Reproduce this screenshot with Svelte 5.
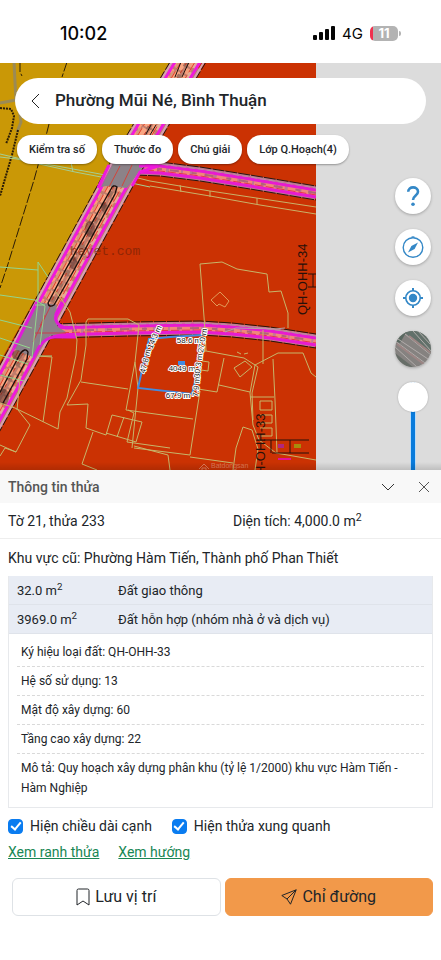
<script>
  let edgeLengths = $state(true);
  let neighbours = $state(true);
  let opacity = $state(100);

  const layers = ['Kiểm tra số', 'Thước đo', 'Chú giải', 'Lớp Q.Hoạch(4)'];
  const areas = [
    { size: '32.0 m', use: 'Đất giao thông' },
    { size: '3969.0 m', use: 'Đất hỗn hợp (nhóm nhà ở và dịch vụ)' }
  ];
  const details = [
    'Ký hiệu loại đất: QH-OHH-33',
    'Hệ số sử dụng: 13',
    'Mật độ xây dựng: 60',
    'Tầng cao xây dựng: 22',
    'Mô tả: Quy hoạch xây dựng phân khu (tỷ lệ 1/2000) khu vực Hàm Tiến - Hàm Nghiệp'
  ];

  const mainRoad = [[188, 62], [179, 77], [148, 130], [125, 168], [71, 267], [38, 328], [0, 398], [-22, 438]];
  const crossRoad = [[50, 332], [130, 330], [200, 329], [232, 331], [270, 335], [316, 342]];
  const northRoad = [[135, 169], [160, 170], [200, 175], [250, 183], [316, 194]];

  const line = (pts, dx, dy) => 'M' + pts.map(([x, y]) => `${x + dx},${y + dy}`).join('L');

  // Parallel lane strokes: [offset, colour, width, dash]
  const mainLanes = [
    [-11, '#ff9c78', 4, '5 3'],
    [-8, '#d8957b', 4, '7 4'],
    [-4, '#f9a582', 5, '9 2'],
    [0, '#a1705f', 5, '6 9 4 11'],
    [5, '#f39f7c', 5, '6 2'],
    [9, '#e2ad98', 4, '7 5'],
    [-7, '#e8402a', 1, '8 3'],
    [7, '#e8402a', 1, '12 3'],
    [-1, '#cf3a25', 1, '4 5'],
    [-13, '#ef1adb', 3, ''],
    [12, '#ef1adb', 3, ''],
    [-16, '#d6a2b4', 2, ''],
    [16, '#d6a2b4', 2, ''],
    [-18, '#26140c', 1, '9 2'],
    [18, '#26140c', 1, '9 2']
  ];
  const sideLanes = [
    [0, '#f0887a', 8, '7 3 12 2'],
    [-1, '#b06478', 2, '9 13 5 8'],
    [1, '#e83548', 1, '8 3'],
    [-4, '#e71bd0', 3, ''],
    [3, '#e71bd0', 3, ''],
    [-6, '#b98ea4', 1, '6 3'],
    [-8, '#26140c', 1, '12 1'],
    [6, '#26140c', 1, '12 1']
  ];
</script>

<div class="app">
  <header class="status">
    <time>10:02</time>
    <div class="signals">
      <svg width="22" height="14" viewBox="0 0 22 14" aria-hidden="true">
        <rect x="0" y="9" width="4" height="5" rx="1" /><rect x="6" y="6" width="4" height="8" rx="1" />
        <rect x="12" y="3" width="4" height="11" rx="1" /><rect x="18" y="0" width="4" height="14" rx="1" />
      </svg>
      <span class="net">4G</span>
      <span class="battery">11</span>
    </div>
  </header>

  <main class="map">
    <svg class="tiles" viewBox="0 63 316 407" preserveAspectRatio="xMinYMin slice" aria-hidden="true">
      <rect y="62" width="316" height="408" fill="#cb3203" />
      <path d="M0,62H170L128,135L107,168L53,267L0,362Z" fill="#ca9806" />

      <g fill="none" stroke="#9b8a55" stroke-width="3">
        <path d="M14,62L15,82L16,100L0,103M19,108L21,122L17,132" />
      </g>
      <g fill="none" stroke="#2b1c06">
        <path d="M20,62V72L22,76M67,62L62,77M49,124L45,140L34,180L8,264L0,288" stroke-dasharray="10 2" />
        <path d="M0,108L11,109L14,116L12,128L6,144M18,130L12,155L7,172L0,196" stroke-width="2" stroke-dasharray="2 1" />
      </g>

      <g fill="none" stroke="#a5cf93">
        <path d="M0,154L30,161L100,174L130,180M0,157L17,159L75,172L122,181L150,187M71,162L73,172M119,172L120,181" />
      </g>
      <g fill="none" stroke="#c9b269">
        <path d="M130,176L150,181L210,191L316,207M150,186L210,196L260,205L316,214M180,185L181,192M210,191V197M257,198V204" />
      </g>

      <path d={line(northRoad, 0, -1)} fill="none" stroke="#bd7790" stroke-width="14" />
      {#each sideLanes as [d, color, w, dash]}
        <path d={line(northRoad, 0, d)} fill="none" stroke={color} stroke-width={w} stroke-dasharray={dash} />
      {/each}
      <path d={line(crossRoad, 0, -1)} fill="none" stroke="#c37a91" stroke-width="13" />
      {#each sideLanes as [d, color, w, dash]}
        <path d={line(crossRoad, 0, d)} fill="none" stroke={color} stroke-width={w} stroke-dasharray={dash} />
      {/each}
      <path d={line(mainRoad, 0, 0)} fill="none" stroke="#c07d6c" stroke-width="31" />
      {#each mainLanes as [d, color, w, dash]}
        <path d={line(mainRoad, d, 0)} fill="none" stroke={color} stroke-width={w} stroke-dasharray={dash} />
      {/each}

      <path d="M113,163H146L139,172L127,188L106,186L101,187Z" fill="#8c8288" />
      <path d="M139,166H158L140,172L132,186M109,165L98,188" fill="none" stroke="#ef1adb" stroke-width="3" />
      <path d="M132,165L122,186M120,166L109,187" stroke="#d2453b" />
      <path d="M37,302L57,305L54,319L58,327L66,332L50,336L42,346L35,358L14,349Z" fill="#8c8088" />
      <path d="M62,302L56,314Q54,325 66,328H76M76,337H55Q46,337 39,347L33,359M37,302L14,348" fill="none" stroke="#e01bd8" stroke-width="3" />
      <path d="M35,333H66M51,305L33,342M45,315L40,326" stroke="#c94049" fill="none" />
      <g fill="#4e2b29" opacity=".5">
        <ellipse cx="90" cy="229" rx="5" ry="8" /><ellipse cx="104" cy="207" rx="3" ry="5" /><ellipse cx="73" cy="263" rx="4" ry="6" />
        <ellipse cx="17" cy="355" rx="5" ry="5" /><ellipse cx="4" cy="397" rx="5" ry="8" />
      </g>
      <g fill="none" stroke="#1d0e0b" stroke-width="1.4" stroke-linecap="round">
        <path d="M111,189Q113,184 117,187L115,194L74,270L54,305Q49,308 48,303L66,269Z" />
        <path d="M-2,396L20,354Q25,347 28,352L27,359L3,403" />
        <path d="M181,62L175,77M189,62L182,77M151,125L146,134M156,125L150,135" stroke-width="1" />
      </g>

      <g fill="none" stroke="#93d58e">
        <path d="M0,267L38,270M38,262V300L32,358M38,262L48,277M0,295L35,300L45,306M0,320L32,328M0,338L30,348M0,355L28,364M0,375L24,381M45,306L40,345M35,305H45M52,356L38,356" />
      </g>
      <g fill="none" stroke="#c7b66a">
        <path d="M38,356L52,357L43,422M0,403L15,408L58,429L60,412L67,398L76,355L77,340L70,312L62,300L55,291" />
        <path d="M18,410L30,425L16,452L0,445M0,456L5,448L16,452M20,378L17,410" />
        <path d="M86,322L88,319L128,319L139,325L135,362L126,410L170,416M86,322V345L81,380L67,405L88,404L86,428L106,435L112,415L142,422L136,442L106,433M124,417L117,437M81,382L128,389M135,362L138,388L132,448M93,432L82,464L97,470M128,410L134,413L127,442L170,448" />
        <path d="M170,416L193,419M134,446L168,455L170,470M134,448L190,455L200,391M190,457L233,463" />
        <path d="M200,264L222,262L237,269L267,274L269,292L281,291L288,313V328M200,264L205,330L206,351L244,358L255,365L278,353H303L311,373L316,377M206,351L198,352M198,389L217,392L224,358M219,385L250,392M202,361L209,362L208,371L201,370M263,330V364M255,365L250,393L253,425L259,440L276,453L316,460M255,365L258,367L252,393L253,420M273,359L275,400L277,453M250,397H274M260,401H272V410H260ZM260,415H272V423H260M260,428H272V436H260M233,470L236,448L243,427L252,430L258,449L255,470" />
        <path d="M211,300L220,292L229,301L225,307L219,304L217,306Z" stroke="#e09b58" />
        <path d="M234,368L245,361L252,367L240,377ZM237,352L241,354M244,354L248,353" />
        <path d="M225,332L236,328L275,329L285,328" stroke="#b6a3a5" />
      </g>

      <path d="M202,335L170,337L149,339L138,388L192,394L198,370" fill="none" stroke="#438be0" stroke-width="2" />
      <rect x="178" y="361" width="7" height="4" fill="#438be0" />
      <g class="measure" text-anchor="middle">
        <text x="189" y="343">58.6 m</text><text x="182" y="371">4049 m</text><text x="178" y="398">67.9 m</text>
        <text transform="translate(148 362) rotate(-76)">47.8 m</text>
        <text transform="translate(157 338) rotate(-66)">14.3 m</text>
        <text transform="translate(205 341) rotate(-80)">27.0 m</text>
        <text transform="translate(201 366) rotate(-83)">30.3 m</text>
        <text transform="translate(199 387) rotate(-84)">7.9 m</text>
      </g>

      <g class="zone">
        <text transform="translate(307 315) rotate(-90)">QH-OHH-34</text>
        <text transform="translate(265 485) rotate(-90)">QH-OHH-33</text>
      </g>
      <path d="M308,274H316M308,287H316M313,274V287M264,440H309M272,453H309M290,440V453M271,440V453" fill="none" stroke="#27100a" />
      <path d="M278,444h6v4h-6z" fill="#b1277d" /><path d="M294,444h7v4h-7z" fill="#a68c0d" /><path d="M278,458h13v2h-13z" fill="#e31297" />
      <text class="host" x="70" y="255">hayet.com</text>
      <path d="M199,469L204,464L209,469M202,470V468H206V470" fill="none" stroke="#df7a58" />
      <text class="credit" x="211" y="468">Batdongsan</text>
    </svg>

    <div class="search">
      <button class="back" aria-label="Quay lại">
        <svg width="10" height="16" viewBox="0 0 10 16"><path d="M8,1L1,8L8,15" /></svg>
      </button>
      <h1>Phường Mũi Né, Bình Thuận</h1>
    </div>
    <div class="chips">
      {#each layers as layer}<button>{layer}</button>{/each}
    </div>

    <div class="tools">
      <button aria-label="Trợ giúp">
        <svg width="24" height="24" viewBox="0 0 24 24"><path d="M7.2,7.8C7.2,1.8 17,2 17,7.7C17,11.4 12,11.5 12,16" stroke-width="2.6" /><circle cx="12" cy="20.2" r="1.8" class="solid" /></svg>
      </button>
      <button aria-label="La bàn">
        <svg width="24" height="24" viewBox="0 0 24 24"><circle cx="12" cy="12.5" r="9.8" stroke-width="1.4" /><path d="M9.5,2.4Q12,.2 14.5,2.4Z" class="solid" /><path d="M17,7.5L13.6,14L7,17.5L10.4,11Z" class="solid" /></svg>
      </button>
      <button aria-label="Vị trí của tôi">
        <svg width="24" height="24" viewBox="0 0 24 24"><circle cx="12" cy="12" r="7.2" stroke-width="1.6" /><circle cx="12" cy="12" r="4.2" class="solid" /><path d="M12,2V5M12,19V22M2,12H5M19,12H22" stroke-width="2" /></svg>
      </button>
      <button class="photo" aria-label="Ảnh vệ tinh">
        <svg width="36" height="36" viewBox="0 0 36 36">
          <rect width="36" height="36" fill="#858280" stroke="none" />
          <path d="M8,0L36,24V0Z" fill="#62706a" stroke="none" /><path d="M0,0H12L5,12L0,10Z" fill="#596860" stroke="none" />
          <g class="lanes"><path d="M0,10L30,32M3,8L36,30M10,3L36,24M18,0L36,20M0,16L22,36M23,0L36,14" /></g>
          <path d="M2,13L30,34M14,5L36,22" stroke="#9c8584" stroke-width="2" />
          <path d="M0,22L18,36H0Z" fill="#676e68" stroke="none" />
        </svg>
      </button>
      <input type="range" min="0" max="100" bind:value={opacity} aria-label="Độ mờ bản đồ" />
    </div>
  </main>

  <section class="panel">
    <div class="bar">
      <h2>Thông tin thửa</h2>
      <button aria-label="Thu gọn"><svg width="14" height="14" viewBox="0 0 14 14"><path d="M1,4L7,10L13,4" /></svg></button>
      <button class="close" aria-label="Đóng"><svg width="14" height="14" viewBox="0 0 14 14"><path d="M2,2L12,12M12,2L2,12" /></svg></button>
    </div>
    <div class="plot">
      <span>Tờ 21, thửa 233</span>
      <span>Diện tích: 4,000.0 m<sup>2</sup></span>
    </div>
    <p class="old">Khu vực cũ: Phường Hàm Tiến, Thành phố Phan Thiết</p>
    <div class="info">
      <table>
        <tbody>
          {#each areas as a}
            <tr><td>{a.size}<sup>2</sup></td><td>{a.use}</td></tr>
          {/each}
        </tbody>
      </table>
      <ul>
        {#each details as d}<li>{d}</li>{/each}
      </ul>
    </div>
    <div class="checks">
      <label><input type="checkbox" bind:checked={edgeLengths} />Hiện chiều dài cạnh</label>
      <label><input type="checkbox" bind:checked={neighbours} />Hiện thửa xung quanh</label>
    </div>
    <div class="links"><a href="#ranh">Xem ranh thửa</a><a href="#huong">Xem hướng</a></div>
    <div class="actions">
      <button><svg width="14" height="18" viewBox="0 0 14 18"><path d="M1,2.5Q1,1 2.5,1H11.5Q13,1 13,2.5V17L7,13L1,17Z" /></svg>Lưu vị trí</button>
      <button class="go"><svg width="16" height="16" viewBox="0 0 16 16"><path d="M15.2,.8L.8,6.5L6,10L9.5,15.2ZM15.2,.8L6,10" /></svg>Chỉ đường</button>
    </div>
  </section>
</div>

<style>
  :global(body) { margin: 0; background: #fff; }
  .app { font-family: Roboto, "Noto Sans", sans-serif; color: #212529; min-height: 100vh; background: #fff; }
  button { font: inherit; color: inherit; border: 0; padding: 0; background: none; cursor: pointer; }
  h1, h2, p, ul { margin: 0; padding: 0; }
  svg { fill: none; stroke: currentColor; flex: none; }

  .status { height: 63px; box-sizing: border-box; padding: 3px 43px 0 60px; display: flex; align-items: center; justify-content: space-between; color: #050505; font-family: Inter, sans-serif; }
  .status time { font-size: 18px; font-weight: 500; }
  .signals { display: flex; align-items: center; gap: 7px; }
  .signals svg { fill: #050505; stroke: none; }
  .net { font-size: 15px; font-weight: 400; }
  .battery { position: relative; width: 28px; height: 15px; border-radius: 5px; background: linear-gradient(90deg, #f0324f 3px, #b3b3b3 3px); color: #fff; font-size: 13px; line-height: 15px; font-weight: 700; text-align: center; }
  .battery::after { content: ""; position: absolute; left: 29px; top: 5px; width: 2px; height: 5px; border-radius: 0 2px 2px 0; background: #b3b3b3; }

  .map { position: relative; overflow: hidden; background: #dcdcdc; padding: 15px 10px 0 15px; }
  .map::after { content: ""; position: absolute; inset: auto 0 0; height: 8px; background: linear-gradient(transparent, #0002); pointer-events: none; }
  .tiles { position: absolute; left: 0; top: 0; height: 100%; stroke: none; }
  .measure text { font: 8px "Liberation Sans", sans-serif; fill: #222; stroke: #fff; stroke-width: 2px; stroke-linejoin: round; paint-order: stroke; }
  .zone text { font: 13px "Liberation Sans", sans-serif; fill: #27100a; stroke: none; }
  .host { font: 13px "Liberation Mono", monospace; fill: #702008; stroke: none; opacity: .65; }
  .credit { font: 7px "Liberation Sans", sans-serif; fill: #df7a58; stroke: none; }

  .search { position: relative; display: flex; align-items: center; gap: 14px; height: 46px; margin-right: 5px; padding-left: 16px; border-radius: 23px; background: #fff; }
  .search h1 { font-size: 17px; line-height: 24px; font-weight: 500; padding-bottom: 2px; }
  .back { display: flex; color: #222; }
  .chips { position: relative; display: flex; gap: 5px; margin: 11px 0 0 2px; }
  .chips button { height: 29px; padding: 0 12px; border-radius: 14px; background: #fff; font-size: 11px; font-weight: 500; box-shadow: 0 1px 2px #0005; white-space: nowrap; }

  .tools { position: relative; display: flex; flex-direction: column; align-items: center; gap: 15px; width: 36px; margin: 14px 0 0 auto; }
  .tools button { width: 36px; height: 36px; border-radius: 50%; background: #fff; color: #3488c7; display: grid; place-items: center; overflow: hidden; box-shadow: 0 1px 3px #0004; }
  .tools .solid { fill: currentColor; stroke: none; }
  .lanes { stroke: #b1acaa; }
  .tools input { appearance: none; writing-mode: vertical-lr; direction: rtl; width: 30px; height: 88px; margin: 0; background: linear-gradient(90deg, transparent 12px, #b9dcfa 12px, #b9dcfa 13px, #087bdc 13px, #087bdc 17px, #b9dcfa 17px, #b9dcfa 18px, transparent 18px); }
  .tools input::-webkit-slider-thumb { appearance: none; width: 30px; height: 30px; border-radius: 50%; background: #fff; box-shadow: 0 0 2px #0004; }

  .panel { font-size: 15px; line-height: 20px; padding-bottom: 24px; }
  .bar { display: flex; align-items: center; height: 33px; padding: 0 10px 0 8px; background: #f8f8f8; color: #333; }
  .bar h2 { flex: 1; font-size: 14px; font-weight: 500; color: #555; }
  .bar button { display: flex; }
  .bar .close { margin-left: 22px; color: #555; }
  .plot { display: grid; grid-template-columns: 225px 1fr; align-items: center; height: 35px; padding: 0 8px; border-bottom: 1px solid #eee; font-size: 14px; }
  sup { font-size: 75%; line-height: 0; vertical-align: 5px; }
  .old { padding: 9px 8px 8px; font-size: 14px; }
  .info { margin: 0 8px; border: 1px solid #e7e9ec; border-top: 0; font-size: 12px; }
  table { width: 100%; border-collapse: collapse; background: #e8ecf4; font-size: 13px; }
  td { height: 26px; padding: 2px 8px 0; border-bottom: 1px solid #dfe3ea; }
  td:first-child { width: 85px; }
  ul { list-style: none; padding: 4px 8px 5px; }
  li { padding: 4px; border-bottom: 1px dashed #d9d9d9; }
  li:last-child { border-bottom: 0; }
  .checks { display: flex; gap: 20px; padding: 8px 8px 0; font-size: 14px; }
  .checks label { display: flex; align-items: center; gap: 7px; }
  .checks input { appearance: none; width: 15px; height: 15px; margin: 0; border-radius: 4px; border: 1px solid #0a7cf0; display: grid; place-items: center; }
  .checks input:checked { background: #0a7cf0; }
  .checks input:checked::before { content: ""; width: 4px; height: 8px; border: solid #fff; border-width: 0 2px 2px 0; transform: rotate(40deg); margin-bottom: 2px; }
  .links { display: flex; gap: 19px; padding: 6px 8px 0; font-size: 14px; }
  .links a { color: #198754; }
  .actions { display: grid; grid-template-columns: 1fr 1fr; gap: 4px; padding: 16px 8px 0 12px; }
  .actions button { display: flex; align-items: center; justify-content: center; gap: 5px; height: 38px; border: 1px solid #dee2e6; border-radius: 6px; font-size: 16px; }
  .actions .go { background: #f2994a; border-color: #f2994a; }
</style>
